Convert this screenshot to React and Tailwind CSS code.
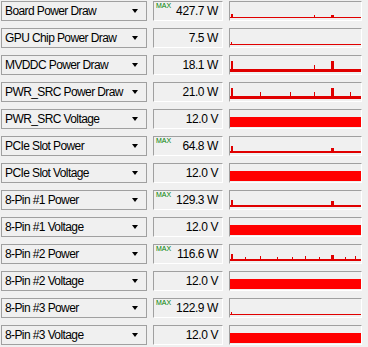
import React from "react";

const rows = [
  { name: "Board Power Draw", value: "427.7 W", max: true, type: "p", base: 1, spikes: [[1, 3, 2], [84, 2, 1], [101, 2, 3]] },
  { name: "GPU Chip Power Draw", value: "7.5 W", base: 1, type: "p", spikes: [[1, 2, 1]] },
  { name: "MVDDC Power Draw", value: "18.1 W", base: 3, type: "p", spikes: [[1, 8, 2], [84, 4, 1], [101, 8, 3]] },
  { name: "PWR_SRC Power Draw", value: "21.0 W", base: 3, type: "p", spikes: [[1, 8, 2], [30, 4, 1], [60, 4, 1], [84, 4, 1], [101, 8, 3], [120, 4, 1]] },
  { name: "PWR_SRC Voltage", value: "12.0 V", type: "v" },
  { name: "PCIe Slot Power", value: "64.8 W", max: true, base: 2, type: "p", spikes: [[1, 5, 2], [101, 3, 3]] },
  { name: "PCIe Slot Voltage", value: "12.0 V", type: "v" },
  { name: "8-Pin #1 Power", value: "129.3 W", max: true, base: 2, type: "p", spikes: [[1, 5, 2], [101, 4, 3]] },
  { name: "8-Pin #1 Voltage", value: "12.0 V", type: "v" },
  { name: "8-Pin #2 Power", value: "116.6 W", max: true, base: 2, type: "p", spikes: [[1, 5, 2], [15, 2, 1], [30, 3, 1], [47, 2, 1], [62, 2, 1], [75, 3, 1], [89, 2, 1], [101, 4, 3], [115, 2, 1], [125, 3, 1]] },
  { name: "8-Pin #2 Voltage", value: "12.0 V", type: "v" },
  { name: "8-Pin #3 Power", value: "122.9 W", max: true, base: 1, type: "p", spikes: [[1, 2, 1]] },
  { name: "8-Pin #3 Voltage", value: "12.0 V", type: "v" },
];

const Graph = ({ row }) => (
  <svg width="131" height="17" className="block">
    {row.type === "v" ? (
      <rect x="0" y="7" width="131" height="10" fill="#ff0000" />
    ) : (
      <>
        <rect x="0" y={17 - row.base - 1} width="131" height={row.base} fill="#e00000" />
        {row.spikes.map(([x, h, w], i) => (
          <rect key={i} x={x} y={17 - row.base - 1 - h} width={w} height={h} fill="#e00000" />
        ))}
      </>
    )}
  </svg>
);

export default function App() {
  return (
    <div
      className="w-[368px] h-[347px] bg-[#f0f0f0] overflow-hidden pt-px pl-px flex flex-col gap-[7px]"
      style={{ fontFamily: '"Liberation Sans", Arial, sans-serif' }}
    >
      {rows.map((row) => (
        <div key={row.name} className="flex h-[20px] shrink-0">
          <div className="w-[146px] h-full border border-[#a0a0a0] bg-[#f0f0f0] flex items-center pl-[3px] pr-[8px] text-[12px] tracking-[-0.6px] text-black">
            <span className="flex-1 truncate">{row.name}</span>
            <span className="w-0 h-0 border-l-[3.5px] border-r-[3.5px] border-t-[4px] border-l-transparent border-r-transparent border-t-black" />
          </div>
          <div className="relative ml-[6px] w-[70px] h-full border-t border-l border-[#a0a0a0] border-r border-b border-r-white border-b-white bg-[#f0f0f0] flex items-center justify-end pr-[4px] text-[12px] tracking-[-0.4px] text-black">
            {row.max && (
              <span className="absolute left-[2px] top-0 text-[7px] leading-[8px] text-[#008000] tracking-normal">MAX</span>
            )}
            {row.value}
          </div>
          <div className="ml-[6px] w-[133px] h-full border-t border-l border-[#a0a0a0] border-r border-b border-r-white border-b-white bg-[#f0f0f0] overflow-hidden">
            <Graph row={row} />
          </div>
        </div>
      ))}
    </div>
  );
}
